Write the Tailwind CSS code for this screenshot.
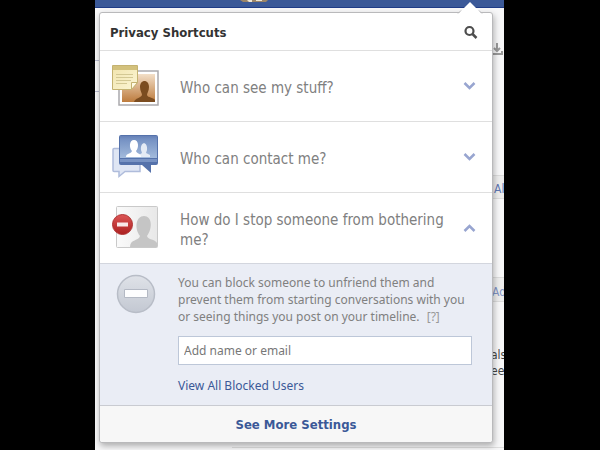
<!DOCTYPE html>
<html lang="en">
<head>
  <meta charset="UTF-8" />
  <meta name="viewport" content="width=device-width, initial-scale=1.0"/>
  <title>Privacy Shortcuts</title>
  <script src="https://cdn.jsdelivr.net/npm/@tailwindcss/browser@4"></script>
</head>
<body class="bg-black font-['DejaVu_Sans_Condensed','Noto_Sans',sans-serif]">

  <div class="relative ml-[95px] mr-24 min-h-screen overflow-hidden bg-[#f7f7f8] pb-2">

    <!-- top bar -->
    <div class="flex h-[8px] justify-center overflow-hidden border-b border-[#1f3c87] bg-[#3b5998] pr-[92px]">
      <svg class="h-[2px] w-[28px]" viewBox="0 0 28 2"><path fill="#9b8568" d="M0 0h28l-2 2H3z"/><path fill="#eee6d4" d="M7 0h5v2H9zM16 0h6v1h-6z"/></svg>
    </div>

    <!-- page behind the menu -->
    <div class="absolute left-0 top-[60px] h-[32px] w-[6px] border-y border-[#b9bcd0]"></div>
    <svg class="absolute right-0 top-[42px] h-[14px] w-[13px]" viewBox="0 0 13 14" fill="none" stroke="#999" stroke-width="2"><path d="M6 1v7M3 6l3 3 3-3M1 9v3h10V9"/></svg>
    <div class="absolute right-0 top-[175px] h-[24px] w-[13px] overflow-hidden border-y border-[#dcdcdc] bg-[#ededed] pl-[3px] text-xs leading-[26px] text-[#5f78b4]"><a href="#">All</a></div>
    <div class="absolute right-0 top-[277px] h-[25px] w-[13px] overflow-hidden border-y border-[#dcdcdc] bg-[#ededed] pl-[1px] text-xs leading-[28px] text-[#7f93c4]"><a href="#">Add</a></div>
    <div class="absolute right-0 top-[347px] w-[13px] overflow-hidden text-xs leading-[16px] text-[#444]">als<br>ee</div>
    <div class="absolute bottom-[3px] left-[137px] right-0 border-t border-[#dedede]"></div>

    <!-- menu -->
    <div class="relative ml-1 mr-[11px] mt-1 rounded-[3px] border border-[#b9b9bb] bg-white shadow-[1px_3px_6px_rgba(0,0,0,0.3)]">
      <svg class="absolute -top-[11px] right-[9px] h-[12px] w-[26px]" viewBox="0 0 26 12"><path fill="#fff" d="M1 12 13 0l12 12z"/><path fill="none" stroke="#b9b9bb" d="M1 11.500 4 8.500M25 11.500 22 8.500"/></svg>

      <div class="flex h-[38px] items-center justify-between border-b border-[#dfdfdf] pl-[10px] pr-[14px] pt-[2px]">
        <h1 class="text-[13px] font-bold text-[#333]">Privacy Shortcuts</h1>
        <button type="button" aria-label="Search">
          <svg class="size-[15px]" viewBox="0 0 15 15" fill="none" stroke="#4d4d4d"><circle cx="6.500" cy="6" r="4" stroke-width="2.200"/><path stroke-width="2.500" d="m9.500 9 4 4"/></svg>
        </button>
      </div>

      <button type="button" class="flex h-[71px] w-full items-center border-b border-[#dfdfdf] pl-[12px] pr-[16px] text-left">
        <svg class="h-[44px] w-[48px] shrink-0" viewBox="0 0 48 44">
          <defs>
            <linearGradient id="photo" x1="0" y1="0" x2="0" y2="1"><stop offset="0" stop-color="#f3dfc8"/><stop offset="1" stop-color="#bd7b3d"/></linearGradient>
            <linearGradient id="note" x1="0" y1="0" x2="1" y2="1"><stop offset="0" stop-color="#f1e4ad"/><stop offset="1" stop-color="#fbf5d5"/></linearGradient>
          </defs>
          <path fill="#fff" stroke="#aaa9ad" stroke-width="1.500" d="M7 7h39v34H7z"/>
          <path fill="url(#photo)" d="M10 10h33v28H10z"/>
          <path fill="#7b4c20" d="M22 38c1-4 7-4 8-7 0-2-2-4-2-8 0-8 9-8 9 0 0 4-2 6-2 8 1 3 6 2 8 5v2z"/>
          <path fill="url(#note)" stroke="#c4b271" d="M.5 1.500h25v17l-6 7H.5z"/>
          <path fill="#d3c17c" d="M1 2h24v4H1z"/>
          <path stroke="#d3c894" d="M4 10.500h17M4 13.500h17M4 16.500h15M4 19.500h11"/>
          <path fill="#fffbe5" stroke="#c4b271" d="M25.500 18.500h-6v7z"/>
        </svg>
        <span class="ml-[20px] flex-1 pt-[4px] text-[15px] leading-[20px] text-[#808080]">Who can see my stuff?</span>
        <svg class="h-[8px] w-[13px]" viewBox="0 0 13 8" fill="none" stroke="#98a5d0" stroke-width="2.500"><path d="m1.500 1 5 5 5-5"/></svg>
      </button>

      <button type="button" class="flex h-[71px] w-full items-center border-b border-[#dfdfdf] pl-[12px] pr-[16px] text-left">
        <svg class="h-[44px] w-[48px] shrink-0" viewBox="0 0 48 44">
          <defs>
            <linearGradient id="chat" x1="0" y1="0" x2="0" y2="1"><stop offset="0" stop-color="#6681b7"/><stop offset=".15" stop-color="#7591c3"/><stop offset="1" stop-color="#a3bbdc"/></linearGradient>
          </defs>
          <path fill="#dfe6f4" stroke="#afbcdb" stroke-width="1.500" d="M2 13.500h26v23H13l-6 5v-5H2q-1 0-1-1v-21q0-1 1-1z"/>
          <path fill="#5572ab" d="M9 0h35q2 0 2 2v26q0 2-2 2h-5v8l-9-8H9q-2 0-2-2V2q0-2 2-2z"/>
          <path fill="url(#chat)" d="M8 1h37v22H8z"/>
          <path fill="#7893c4" d="M8 24h37v3H8z"/>
          <path fill="#e4ebf5" d="M27 22v-2l3-2-1-3c-1-9 7-9 6 0l-1 3 4 2v2z"/>
          <path fill="#fff" d="M14 22c0-4 5-3 6-6-3-3-3-11 2-11s5 8 2 11c1 3 5 2 5 6z"/>
        </svg>
        <span class="ml-[20px] flex-1 pt-[4px] text-[15px] leading-[20px] text-[#808080]">Who can contact me?</span>
        <svg class="h-[8px] w-[13px]" viewBox="0 0 13 8" fill="none" stroke="#98a5d0" stroke-width="2.500"><path d="m1.500 1 5 5 5-5"/></svg>
      </button>

      <button type="button" class="flex h-[71px] w-full items-center border-b border-[#d3d6de] pl-[12px] pr-[16px] text-left">
        <svg class="h-[44px] w-[48px] shrink-0" viewBox="0 0 48 44">
          <defs>
            <linearGradient id="stop" x1="0" y1="0" x2="0" y2="1"><stop offset="0" stop-color="#dd5656"/><stop offset="1" stop-color="#ab2020"/></linearGradient>
            <linearGradient id="card" x1="0" y1="0" x2="1" y2="0"><stop offset="0" stop-color="#fafafa"/><stop offset="1" stop-color="#e8e8e8"/></linearGradient>
          </defs>
          <rect x="4.500" y=".5" width="41" height="41" rx="1" fill="url(#card)" stroke="#c9c9c9"/>
          <path fill="#c5c5c5" d="M18 41c0-8 9-6 10-11-6-8-4-20 4-20s9 12 3 20c1 4 8 3 10 7v4z"/>
          <circle cx="10.500" cy="18.500" r="10" fill="url(#stop)" stroke="#b03434"/>
          <path fill="#f8e9e9" d="M5 16.500h11v4H5z"/>
        </svg>
        <span class="ml-[20px] flex-1 pt-[4px] text-[15px] leading-[20px] text-[#808080]">How do I stop someone from bothering me?</span>
        <svg class="h-[8px] w-[13px]" viewBox="0 0 13 8" fill="none" stroke="#98a5d0" stroke-width="2.500"><path d="m1.500 7 5-5 5 5"/></svg>
      </button>

      <div class="flex h-[142px] items-start border-b border-[#c9cbd1] bg-[#eaedf5] pl-[16px] pr-[20px] pt-[10px] font-['Noto_Sans',sans-serif]">
        <svg class="size-[40px] shrink-0" viewBox="0 0 40 40">
          <defs><linearGradient id="block" x1="0" y1="0" x2="0" y2="1"><stop offset="0" stop-color="#dfe2e8"/><stop offset="1" stop-color="#c3c8d2"/></linearGradient></defs>
          <circle cx="20" cy="20" r="18.500" fill="url(#block)" stroke="#b8bdc7" stroke-width="1.500"/>
          <path fill="#fdfdfe" stroke="#b4b9c4" d="M8.500 15.500h23v8h-23z"/>
        </svg>
        <div class="ml-[22px] flex-1">
          <p class="text-[12px] leading-[17px] text-[#808080]">You can block someone to unfriend them and prevent them from starting conversations with you or seeing things you post on your timeline. <a href="#" class="ml-1 text-[#999]">[?]</a></p>
          <input type="text" aria-label="Add name or email" placeholder="Add name or email" class="mt-[11px] block h-[29px] w-full border border-[#bdc7d8] bg-white px-[5px] text-[12px] placeholder:text-[#777]"/>
          <a href="#" class="mt-[12px] block text-[12px] leading-[17px] text-[#3b5998]">View All Blocked Users</a>
        </div>
      </div>

      <a href="#" class="flex h-[36px] items-center justify-center rounded-b-[3px] bg-[#f7f7f7] pt-[2px] text-[13px] font-bold text-[#3b5998]">See More Settings</a>
    </div>
  </div>

</body>
</html>
